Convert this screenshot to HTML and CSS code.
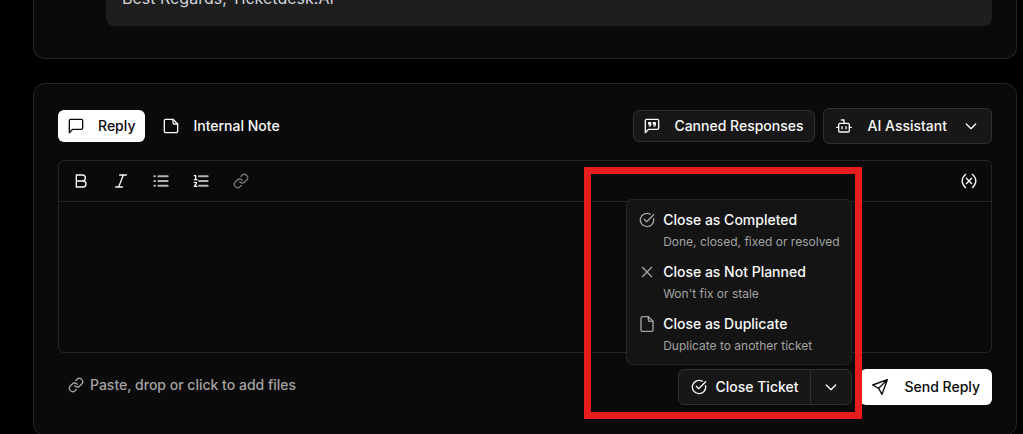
FILE: index.html
```html
<!DOCTYPE html>
<html lang="en">
<head>
<meta charset="utf-8">
<title>Ticket reply</title>
<link rel="stylesheet" href="styles.css">
</head>
<body>
<svg class="sprite" aria-hidden="true">
  <symbol id="i-link" viewBox="0 0 24 24"><path d="M10 13a5 5 0 0 0 7.54.54l3-3a5 5 0 0 0-7.07-7.07l-1.72 1.71"/><path d="M14 11a5 5 0 0 0-7.54-.54l-3 3a5 5 0 0 0 7.07 7.07l1.71-1.71"/></symbol>
  <symbol id="i-check" viewBox="0 0 24 24"><path d="M21.8 10A10 10 0 1 1 17 3.34"/><path d="m8 11 3.5 3.5L22 4"/></symbol>
  <symbol id="i-down" viewBox="0 0 24 24"><path d="m5 9 7 7 7-7"/></symbol>
</svg>
<main class="page">
  <section class="card thread">
    <p class="message">Best Regards, Ticketdesk.AI</p>
  </section>

  <section class="card composer">
    <header class="bar">
      <div class="group">
        <button class="tab tab-active"><svg class="icon" viewBox="0 0 24 24"><path d="M22 15a2 2 0 0 1-2 2H7l-5 5V4a2 2 0 0 1 2-2h16a2 2 0 0 1 2 2z"/></svg>Reply</button>
        <button class="tab"><svg class="icon" viewBox="0 0 24 24"><path d="M15 2H4a2 2 0 0 0-2 2v16a2 2 0 0 0 2 2h16a2 2 0 0 0 2-2V9z"/><path d="M15 2v5a2 2 0 0 0 2 2h5"/></svg>Internal Note</button>
      </div>
      <div class="group">
        <button class="outline"><svg class="icon" viewBox="0 0 24 24"><path d="M22 15a2 2 0 0 1-2 2H7l-5 5V4a2 2 0 0 1 2-2h16a2 2 0 0 1 2 2z"/><path d="M8 12a2 2 0 0 0 2-2V7H7v2h3M15 12a2 2 0 0 0 2-2V7h-3v2h3"/></svg>Canned Responses</button>
        <button class="outline outline-large"><svg class="icon" viewBox="0 0 24 24"><path d="M12 8V3H8"/><rect x="4" y="8" width="16" height="13" rx="2"/><path d="M1 14h3M20 14h3M9 13v3M15 13v3"/></svg>AI Assistant<svg class="icon chevron" viewBox="0 0 24 24"><use href="#i-down"/></svg></button>
      </div>
    </header>

    <div class="editor">
      <div class="toolbar">
        <div class="tools">
          <button class="tool" aria-label="Bold"><svg class="icon" viewBox="0 0 24 24"><path d="M5 3h9a4.500 4.500 0 0 1 0 9H5zM5 12h10a4.500 4.500 0 0 1 0 9H5z"/></svg></button>
          <button class="tool" aria-label="Italic"><svg class="icon" viewBox="0 0 24 24"><path d="M20 3H10M14 21H4M15.500 3l-7 18"/></svg></button>
          <button class="tool tool-list" aria-label="Bulleted list"><svg class="icon" viewBox="0 0 24 24"><path d="M8 5h14M8 12h14M8 19h14M2 5h1M2 12h1M2 19h1"/></svg></button>
          <button class="tool tool-list" aria-label="Numbered list"><svg class="icon" viewBox="0 0 24 24"><path d="M9 5h13M9 12h13M9 19h13"/><path class="digits" d="M2 4h2v6M2 10h4M2 14h3v2l-3 4h4"/></svg></button>
          <button class="tool tool-muted" aria-label="Link"><svg class="icon" viewBox="0 0 24 24"><use href="#i-link"/></svg></button>
        </div>
        <button class="tool" aria-label="Insert variable"><svg class="icon" viewBox="0 0 24 24"><path d="M7 2C0 8 0 16 7 22M17 2c7 6 7 14 0 20M8 8l8 8M16 8l-8 8"/></svg></button>
      </div>
      <textarea class="text" aria-label="Reply text"></textarea>
    </div>

    <footer class="bar footer">
      <button class="attach"><svg class="icon" viewBox="0 0 24 24"><use href="#i-link"/></svg>Paste, drop or click to add files</button>
      <div class="group">
        <div class="close">
          <div class="split">
            <button class="split-main"><svg class="icon" viewBox="0 0 24 24"><use href="#i-check"/></svg>Close Ticket</button>
            <button class="split-arrow" aria-label="More close options"><svg class="icon" viewBox="0 0 24 24"><use href="#i-down"/></svg></button>
          </div>
          <div class="menu">
            <button class="option"><svg class="icon" viewBox="0 0 24 24"><use href="#i-check"/></svg><span class="label">Close as Completed</span><span class="hint">Done, closed, fixed or resolved</span></button>
            <button class="option"><svg class="icon" viewBox="0 0 24 24"><path d="M19 5 5 19M5 5l14 14"/></svg><span class="label">Close as Not Planned</span><span class="hint">Won't fix or stale</span></button>
            <button class="option"><svg class="icon" viewBox="0 0 24 24"><path d="M14 1H5a2 2 0 0 0-2 2v18a2 2 0 0 0 2 2h14a2 2 0 0 0 2-2V8z"/><path d="M14 1v5a2 2 0 0 0 2 2h5"/></svg><span class="label">Close as Duplicate</span><span class="hint">Duplicate to another ticket</span></button>
          </div>
          <div class="highlight"></div>
        </div>
        <button class="send"><svg class="icon" viewBox="0 0 24 24"><path d="M23 1 15 23l-5-9-9-5zM23 1 10 14"/></svg>Send Reply</button>
      </div>
    </footer>
  </section>
</main>
</body>
</html>
```
FILE: styles.css
```css
* { box-sizing: border-box; }
body {
  margin: 0;
  background: #000;
  color: #fafafa;
  font: 500 14px/20px Inter, "Liberation Sans", sans-serif;
  overflow: hidden;
}
button { font: inherit; color: inherit; background: none; border: 0; padding: 0; margin: 0; display: flex; align-items: center; white-space: nowrap; }
.sprite { display: none; }
.icon { width: 16px; height: 16px; flex: none; fill: none; stroke: currentColor; stroke-width: 2; stroke-linecap: round; stroke-linejoin: round; }
.page { padding: 0 6px 0 33px; display: flex; flex-direction: column; gap: 24px; }
.card { background: #0a0a0a; border: 1px solid #262626; border-radius: 12px; }
.thread { height: 59px; border-top: 0; border-radius: 0 0 12px 12px; padding: 0 24px 32px 72px; display: flex; flex-direction: column; justify-content: flex-end; overflow: hidden; }
.message { margin: 0; padding: 16px; font-size: 16px; line-height: 24px; font-weight: 400; color: #d1d5db; background: #1e1e1e; border-radius: 8px; }
.composer { padding: 24px 24px 30px; }
.bar { display: flex; align-items: center; justify-content: space-between; }
.footer { align-items: flex-start; }
.group { display: flex; align-items: center; gap: 8px; }
.tab { height: 32px; padding: 0 10px; gap: 14px; border-radius: 6px; }
.tab-active { background: #fff; color: #0a0a0a; }
.outline { height: 32px; padding: 0 10px; gap: 14px; border: 1px solid #303030; border-radius: 6px; background: #171717; }
.outline-large { height: 36px; padding: 0 12px; gap: 16px; }
.editor { margin: 16px 0; border: 1px solid #262626; border-radius: 6px; }
.toolbar { height: 41px; padding: 0 14px; border-bottom: 1px solid #262626; display: flex; align-items: center; justify-content: space-between; }
.tools { display: flex; gap: 24px; }
.tool-list { color: #b4b4b4; }
.tool-list .icon { stroke-width: 3; }
.tool-list .digits { stroke: #fff; stroke-width: 2; }
.tool-muted { color: #777; }
.text { display: block; width: 100%; height: 150px; resize: none; border: 0; outline: 0; padding: 12px; background: none; color: inherit; font: inherit; }
.attach { height: 32px; padding-left: 10px; gap: 6px; color: #a3a3a3; }
.close { position: relative; }
.split { display: flex; height: 36px; border: 1px solid #303030; border-radius: 6px; background: #171717; }
.split-main { padding: 0 12px; gap: 8px; }
.split-arrow { padding: 0 12px; border-left: 1px solid #303030; }
.menu { position: absolute; right: 0; bottom: 40px; padding: 4px; border: 1px solid #262626; border-radius: 6px; background: #141414; }
.option { display: grid; grid-template-columns: 16px auto; column-gap: 8px; padding: 6px 8px; text-align: left; width: 100%; }
.option .icon { color: #a3a3a3; }
.hint { grid-column: 2; margin-top: 4px; font-size: 12px; line-height: 16px; font-weight: 400; color: #a3a3a3; }
.highlight { position: absolute; inset: -202px -10px -14px -94px; border: 7px solid #e71c1c; pointer-events: none; z-index: 1; }
.send { height: 36px; padding: 0 12px; gap: 16px; border-radius: 6px; background: #fff; color: #0a0a0a; }
```
